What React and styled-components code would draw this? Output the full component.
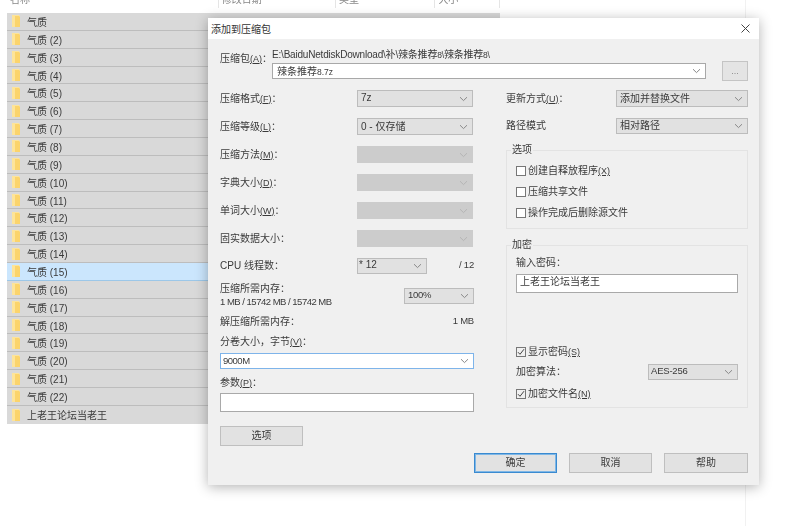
import React from 'react';
import styled, { createGlobalStyle } from 'styled-components';

const Global = createGlobalStyle`
  html, body { margin: 0; padding: 0; background: #fff; }
  body { width: 800px; height: 526px; overflow: hidden; font-family: "Liberation Sans", "Noto Sans CJK SC", sans-serif; color: #3a3a3a; }
`;
const Page = styled.div`
  position: relative; width: 800px; height: 526px; overflow: hidden; filter: blur(0.35px);
`;
const Gutter = styled.div`
  position: absolute; left: 745px; top: 0; bottom: 0; width: 1px; background: #f1f1f1;
`;
const Explorer = styled.div`
  display: flex; flex-direction: column; padding-left: 7px; width: 493px;
`;
const Header = styled.div`
  display: flex; height: 13px; font-size: 10px; color: #888; align-items: flex-start;
`;
const HeadCell = styled.div`
  width: ${p => p.$w}px; padding-left: 3px; height: 8px; box-sizing: border-box; border-right: 1px solid #e5e5e5; overflow: hidden;
`;
const HeadText = styled.div`
  margin-top: -7px; line-height: 13px; white-space: nowrap;
`;
const FileRow = styled.div`
  display: flex; align-items: center; height: 17.87px; box-sizing: border-box; padding-left: 5px; gap: 7px;
  font-size: 10px; background: ${p => p.$sel ? '#cbe6fd' : '#d9d9d9'};
  border-bottom: 1px solid ${p => p.$sel ? '#9cc7e8' : '#bdbdbd'};
  ${p => p.$last ? 'border-bottom: none;' : ''}
`;
const Dialog = styled.div`
  position: absolute; left: 208px; top: 18px; width: 551px; height: 467px; background: #f0f0f0;
  box-shadow: 0 2px 12px rgba(0,0,0,.3); display: flex; flex-direction: column;
`;
const TitleBar = styled.div`
  height: 21px; flex: none; background: #fff; display: flex; align-items: center; justify-content: space-between;
  padding: 0 9px 0 3px; font-size: 10px; color: #333;
`;
const Body = styled.div`
  padding: 9px 11px 0 12px; display: flex; flex-direction: column;
`;
const ArchiveRow = styled.div`
  display: flex; height: 33px;
`;
const ArchiveLabel = styled.div`
  width: 52px; font-size: 10px; line-height: 12px; padding-top: 5px; flex: none;
`;
const ArchiveStack = styled.div`
  width: 434px; display: flex; flex-direction: column; font-size: 10px;
`;
const PathText = styled.div`
  height: 15px; line-height: 13px; white-space: nowrap; letter-spacing: -.2px;
`;
const Tiny = styled.span`
  font-size: 8.5px;
`;
const DotsBtn = styled.div`
  width: 26px; height: 20px; margin: 13px 0 0 16px; box-sizing: border-box; background: #e4e4e4; border: 1px solid #c4c4c4;
  font-size: 9px; text-align: center; line-height: 19px; color: #888; flex: none;
`;
const Columns = styled.div`
  display: flex; margin-top: 9px; gap: 32px;
`;
const Col = styled.div`
  width: ${p => p.$w}px; display: flex; flex-direction: column; flex: none;
`;
const Row = styled.div`
  display: grid; grid-template-columns: ${p => p.$cols || '137px 116px'}; align-items: center;
  height: ${p => p.$h || 17}px; margin-top: ${p => p.$mt || 0}px; font-size: 10px;
`;
const Label = styled.span`
  padding-bottom: 2px;
`;
const Select = styled.div`
  height: ${p => p.$h || 17}px; box-sizing: border-box; display: flex; align-items: center; justify-content: space-between;
  padding: 0 4px 0 ${p => p.$pl || 3}px; font-size: ${p => p.$fs || 10}px; letter-spacing: ${p => p.$ls || 0}px; white-space: nowrap; margin-top: ${p => p.$mt || 0}px;
  background: ${p => p.$off ? '#cccccc' : p.$white ? '#fff' : '#e1e1e1'};
  border: 1px solid ${p => p.$off ? '#cccccc' : p.$focus ? '#7eb4ea' : p.$white ? '#a8a8a8' : '#bcbcbc'};
`;
const DropText = styled.span`
  padding-bottom: 2px;
`;
const Chev = ({ off }) => (
  <svg width="9" height="6" viewBox="0 0 9 6" style={{ flex: 'none' }}>
    <path d="M1 1.2 L4.5 4.6 L8 1.2" fill="none" stroke={off ? '#b5b5b5' : '#888'} strokeWidth="1" />
  </svg>
);
const Drop = ({ children, off, ...rest }) => <Select $off={off} {...rest}><DropText>{children}</DropText><Chev off={off} /></Select>;
const U = styled.span`
  font-size: 9px; text-decoration: underline; text-underline-offset: 1px;
`;
const L = ({ t, k, end = '：' }) => <Label>{t}{k && <U>({k})</U>}{end}</Label>;
const RightValue = styled.span`
  text-align: right; font-size: 9.5px; letter-spacing: -.2px; padding-bottom: 2px;
`;
const MemStack = styled.div`
  display: flex; flex-direction: column; gap: 2px; line-height: 11px; align-self: start;
`;
const MemValue = styled.span`
  font-size: 9.5px; letter-spacing: -.5px;
`;
const Line = styled.div`
  height: ${p => p.$h}px; margin-top: ${p => p.$mt || 0}px; font-size: 10px; line-height: ${p => p.$h}px;
`;
const TextBox = styled.div`
  height: ${p => p.$h}px; box-sizing: border-box; background: #fff; border: 1px solid #a9a9a9; font-size: 10px; padding-left: 3px;
  line-height: ${p => p.$h - 6}px; margin-top: ${p => p.$mt || 0}px;
`;
const Btn = styled.div`
  width: ${p => p.$w}px; height: 20px; box-sizing: border-box; background: #e2e2e2; flex: none;
  border: ${p => p.$primary ? '1px solid #3a8ad0' : '1px solid #bfbfbf'}; ${p => p.$primary ? 'box-shadow: inset 0 0 0 1px #7fb7e6;' : ''}
  font-size: 10px; text-align: center; line-height: 18px; margin-top: ${p => p.$mt || 0}px;
`;
const Group = styled.div`
  position: relative; box-sizing: border-box; height: ${p => p.$h}px; margin-top: ${p => p.$mt}px; border: 1px solid #e3e3e3;
  padding: ${p => p.$pt}px 9px 0 9px; display: flex; flex-direction: column;
`;
const Legend = styled.span`
  position: absolute; left: 4px; top: -7px; padding: 0 1px; background: #f0f0f0; font-size: 10px; line-height: 12px;
`;
const Check = styled.div`
  display: flex; align-items: center; gap: 2px; height: 11px; font-size: 10px; margin-top: ${p => p.$mt || 0}px; white-space: nowrap;
`;
const Box = styled.span`
  width: 10px; height: 10px; box-sizing: border-box; border: 1px solid #777; background: ${p => p.$on ? '#f0f0f0' : '#fff'}; display: flex; flex: none;
`;
const CheckText = styled.span`
  padding-bottom: 2px;
`;
const CheckItem = ({ on, children, mt }) => (
  <Check $mt={mt}>
    <Box $on={on}>{on && <svg width="8" height="8" viewBox="0 0 8 8"><path d="M1 4.2 L3 6.3 L7 1.2" fill="none" stroke="#444" strokeWidth="1" /></svg>}</Box>
    <CheckText>{children}</CheckText>
  </Check>
);
const Footer = styled.div`
  position: absolute; right: 11px; bottom: 12px; display: flex; gap: 12px;
`;
const CloseBtn = () => (
  <svg width="9" height="9" viewBox="0 0 9 9"><path d="M.5 .5 L8.5 8.5 M8.5 .5 L.5 8.5" stroke="#444" strokeWidth="1" fill="none" /></svg>
);
const Folder = () => (
  <svg width="8" height="12" viewBox="0 0 8 12" style={{ flex: 'none' }}>
    <path d="M0 0 H7 L8 2 V12 H0 Z" fill="#fde49a" />
    <path d="M3 1 H7 L8 2 V12 H3 Z" fill="#f9cf5c" opacity=".75" />
  </svg>
);

const names = ['气质', ...Array.from({ length: 21 }, (_, i) => `气质 (${i + 2})`), '上老王论坛当老王'];
const heads = [[213, '名称'], [118, '修改日期'], [100, '类型'], [65, '大小']];

export default function App() {
  return (
    <Page>
      <Global />
      <Gutter />
      <Explorer>
        <Header>
          {heads.map(([w, t]) => <HeadCell key={t} $w={w}><HeadText>{t}</HeadText></HeadCell>)}
        </Header>
        {names.map((n, i) => (
          <FileRow key={n} $sel={i === 14} $last={i === names.length - 1}><Folder /><span>{n}</span></FileRow>
        ))}
      </Explorer>
      <Dialog>
        <TitleBar><span>添加到压缩包</span><CloseBtn /></TitleBar>
        <Body>
          <ArchiveRow>
            <ArchiveLabel><L t="压缩包" k="A" /></ArchiveLabel>
            <ArchiveStack>
              <PathText>E:\BaiduNetdiskDownload\补\辣条推荐<Tiny>8\</Tiny>辣条推荐<Tiny>8\</Tiny></PathText>
              <Drop $white $h={16} $pl={4}>辣条推荐<Tiny>8.7z</Tiny></Drop>
            </ArchiveStack>
            <DotsBtn>...</DotsBtn>
          </ArchiveRow>
          <Columns>
            <Col $w={254}>
              <Row><L t="压缩格式" k="F" /><Drop>7z</Drop></Row>
              <Row $mt={11}><L t="压缩等级" k="L" /><Drop>0 - 仅存储</Drop></Row>
              <Row $mt={11}><L t="压缩方法" k="M" /><Drop off /></Row>
              <Row $mt={11}><L t="字典大小" k="D" /><Drop off /></Row>
              <Row $mt={11}><L t="单词大小" k="W" /><Drop off /></Row>
              <Row $mt={11}><L t="固实数据大小" /><Drop off /></Row>
              <Row $mt={10} $h={16} $cols="137px 70px 47px"><Label>CPU 线程数：</Label><Drop $h={16} $pl={1} $fs={10}>* 12</Drop><RightValue>/ 12</RightValue></Row>
              <Row $mt={10} $h={25} $cols="184px 70px">
                <MemStack><span>压缩所需内存：</span><MemValue>1 MB / 15742 MB / 15742 MB</MemValue></MemStack>
                <Drop $h={16} $fs={9.5} $ls={-0.3}>100%</Drop>
              </Row>
              <Row $mt={5} $h={12} $cols="184px 70px"><L t="解压缩所需内存" /><RightValue>1 MB</RightValue></Row>
              <Line $h={12} $mt={11}><L t="分卷大小，字节" k="V" /></Line>
              <Drop $white $focus $h={16} $mt={5} $pl={2} $fs={9.5} $ls={-0.5}>9000M</Drop>
              <Line $h={12} $mt={8}><L t="参数" k="P" /></Line>
              <TextBox $h={19} $mt={4} />
              <Btn $w={83} $mt={14}>选项</Btn>
            </Col>
            <Col $w={242}>
              <Row $cols="110px 132px"><L t="更新方式" k="U" /><Drop>添加并替换文件</Drop></Row>
              <Row $cols="110px 132px" $h={16} $mt={10}><Label>路径模式</Label><Drop $h={16}>相对路径</Drop></Row>
              <Group $h={79} $mt={17} $pt={14}>
                <Legend>选项</Legend>
                <CheckItem>创建自释放程序<U>(X)</U></CheckItem>
                <CheckItem mt={10}>压缩共享文件</CheckItem>
                <CheckItem mt={10}>操作完成后删除源文件</CheckItem>
              </Group>
              <Group $h={163} $mt={16} $pt={11}>
                <Legend>加密</Legend>
                <Line $h={12}>输入密码：</Line>
                <TextBox $h={19} $mt={5}>上老王论坛当老王</TextBox>
                <CheckItem on mt={53}>显示密码<U>(S)</U></CheckItem>
                <Row $cols="132px 90px" $h={16} $mt={6}><Label>加密算法：</Label><Drop $h={16} $pl={2} $fs={9.5} $ls={-0.2}>AES-256</Drop></Row>
                <CheckItem on mt={9}>加密文件名<U>(N)</U></CheckItem>
              </Group>
            </Col>
          </Columns>
        </Body>
        <Footer>
          <Btn $w={83} $primary>确定</Btn>
          <Btn $w={83}>取消</Btn>
          <Btn $w={84}>帮助</Btn>
        </Footer>
      </Dialog>
    </Page>
  );
}
